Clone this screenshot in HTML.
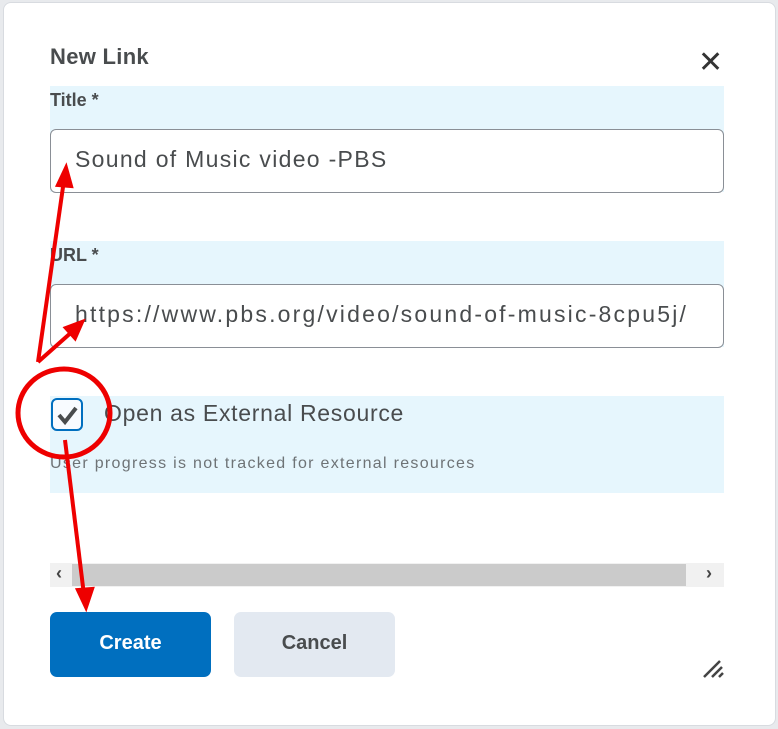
<!DOCTYPE html>
<html><head><style>
html,body{margin:0;padding:0;width:778px;height:729px;background:#e8eaed;overflow:hidden;font-family:"Liberation Sans",sans-serif;}
.card{position:absolute;left:3px;top:2px;width:771px;height:722px;background:#fff;border-radius:8px;border:1px solid #d8dbe0;}
.abs{position:absolute;white-space:nowrap;}
.band{position:absolute;left:50px;width:674px;background:#e6f6fd;}
.inp{position:absolute;left:50px;width:674px;height:64px;border:1.5px solid #8a8f96;border-radius:6px;background:#fff;font-size:23px;color:#494c4e;box-sizing:border-box;white-space:nowrap;}
</style></head><body>
<div class="card"></div>
<div class="abs" style="left:50px;top:44px;font-size:22px;font-weight:bold;color:#494c4e;letter-spacing:0.3px;">New Link</div>
<div class="abs" style="left:698px;top:48px;font-size:30px;color:#333;line-height:30px;">✕</div>
<div class="band" style="top:86px;height:106px;"></div>
<div class="abs" style="left:50px;top:90px;font-size:18px;font-weight:bold;color:#494c4e;">Title *</div>
<div class="inp" style="top:129px;padding:16px 0 0 24px;letter-spacing:1.3px;">Sound of Music video -PBS</div>
<div class="band" style="top:241px;height:106px;"></div>
<div class="abs" style="left:50px;top:245px;font-size:18px;font-weight:bold;color:#494c4e;">URL *</div>
<div class="inp" style="top:284px;padding:16px 0 0 24px;letter-spacing:2.2px;">https://www.pbs.org/video/sound-of-music-8cpu5j/</div>
<div class="band" style="top:396px;height:97px;"></div>
<div class="abs" style="left:51px;top:398px;width:32px;height:33px;border:2px solid #006fbf;border-radius:6px;background:#f8fbff;box-sizing:border-box;"></div>
<svg class="abs" style="left:55px;top:403px" width="26" height="24"><path d="M4 12 L10 19 L21 5" stroke="#494c4e" stroke-width="4" fill="none"/></svg>
<div class="abs" style="left:104px;top:400px;font-size:23px;color:#494c4e;letter-spacing:0.7px;">Open as External Resource</div>
<div class="abs" style="left:50px;top:455px;font-size:16px;color:#6e7376;letter-spacing:1.3px;">User progress is not tracked for external resources</div>
<div class="abs" style="left:50px;top:563px;width:674px;height:24px;background:#f1f1f1;"></div>
<div class="abs" style="left:72px;top:564px;width:614px;height:22px;background:#cbcbcb;"></div>
<div class="abs" style="left:56px;top:563px;font-size:18px;font-weight:bold;color:#444;">‹</div>
<div class="abs" style="left:706px;top:563px;font-size:18px;font-weight:bold;color:#444;">›</div>
<div class="abs" style="left:50px;top:612px;width:161px;height:65px;background:#006fbf;border-radius:7px;color:#fff;font-size:20px;font-weight:bold;text-align:center;line-height:63px;">Create</div>
<div class="abs" style="left:234px;top:612px;width:161px;height:65px;background:#e3e9f1;border-radius:7px;color:#494c4e;font-size:20px;font-weight:bold;text-align:center;line-height:63px;">Cancel</div>
<svg class="abs" style="left:700px;top:655px" width="26" height="26"><path d="M4 22 L20 6 M12 22 L22 12 M19 22 L23 18" stroke="#444" stroke-width="2.5"/></svg>
<svg class="abs" style="left:0;top:0" width="778" height="729">
<g stroke="#ee0000" stroke-width="4" fill="#ee0000">
<line x1="38" y1="362" x2="64" y2="180"/>
<polygon points="66,168 58,185 71,186"/>
<line x1="38" y1="362" x2="74" y2="330"/>
<polygon points="82,322 66,328 75,338"/>
<line x1="65" y1="440" x2="84" y2="595"/>
<polygon points="86,607 78,590 92,589"/>
<ellipse cx="64" cy="413" rx="46" ry="44" fill="none" stroke-width="5"/>
</g></svg>
</body></html>
